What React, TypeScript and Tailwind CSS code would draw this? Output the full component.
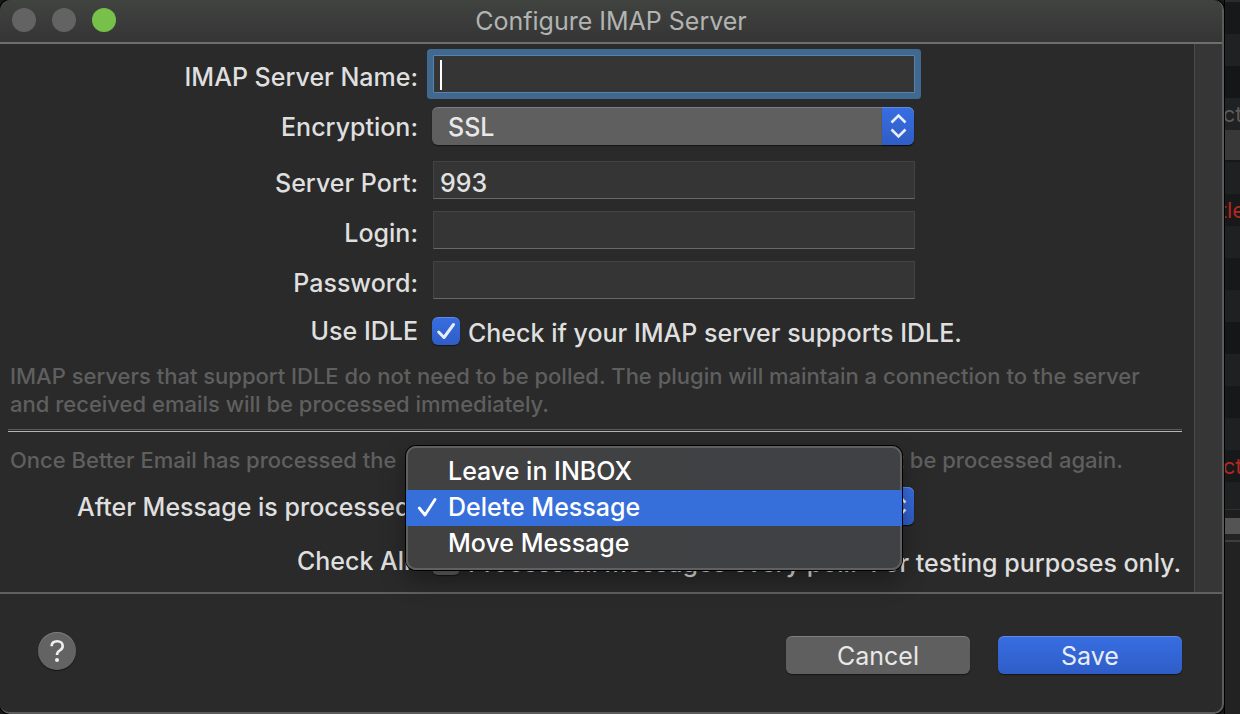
import React, { useState } from 'react';
import { clsx } from 'clsx';

const AFTER_OPTIONS = ['Leave in INBOX', 'Delete Message', 'Move Message'];

// Rows of the list window that peeks out behind the dialog
const BACKDROP_ROWS = [
  { className: 'h-0.5 bg-[#2a2b2c]' },
  { className: 'h-8 bg-[#17181a]' },
  { className: 'h-8 bg-[#202123]' },
  { className: 'h-8 bg-[#151617]' },
  { className: 'h-8 bg-[#202123] text-[#5a5b5c]', text: 'ct' },
  { className: 'h-[30px] bg-[#383838]' },
  { className: 'h-0.5 bg-[#17181a]' },
  { className: 'h-8 bg-[#1f2022]' },
  { className: 'h-8 bg-[#17181a] text-[#b3271e]', text: 'tle' },
  { className: 'h-8 bg-[#1f2022]' },
  { className: 'h-8 bg-[#17181a]' },
  { className: 'h-8 bg-[#1f2022]' },
  { className: 'h-8 bg-[#151617]' },
  { className: 'h-8 bg-[#1f2022]' },
  { className: 'h-8 bg-[#17181a]' },
  { className: 'h-8 bg-[#1f2022]' },
  { className: 'h-8 bg-[#17181a] text-[#b3271e]', text: 'ct' },
  { className: 'h-7 bg-[#1f2022] border-b border-[#303132]' },
  { className: 'h-2 bg-[#1e1e1e]' },
  { className: 'h-4 bg-[#545454]' },
  { className: 'h-2 bg-[#242424] border-b-2 border-[#3e3e3e]' },
];

const SHADE = 'shadow-[inset_0_1px_0_rgba(255,255,255,0.2),0_1px_1px_rgba(0,0,0,0.5)]';

function Row({ label, htmlFor, className, labelClass, children }: {
  label: string;
  htmlFor: string;
  className?: string;
  labelClass?: string;
  children: React.ReactNode;
}) {
  return (
    <div className={clsx('grid grid-cols-[418px_1fr] gap-x-3.5', className)}>
      <label htmlFor={htmlFor} className={clsx('flex items-center justify-end whitespace-nowrap', labelClass)}>
        {label}
      </label>
      {children}
    </div>
  );
}

function TextField({ id, type = 'text', value, focused }: { id: string; type?: string; value?: string; focused?: boolean }) {
  return (
    <div className="relative ml-px w-[482px]">
      <input
        id={id}
        type={type}
        defaultValue={value}
        className={clsx(
          'block h-[38px] w-full border bg-[#353535] px-1.5 pt-1.5 text-[#e2e2e2] caret-white outline-none',
          focused
            ? 'border-[#5583ae] shadow-[0_0_0_6px_#41698f] rounded-[1px] caret-transparent'
            : 'border-[#434343] border-b-[#686868]'
        )}
      />
      {focused && <span className="absolute left-[7px] top-[5px] h-[30px] w-0.5 bg-white" />}
    </div>
  );
}

function Popup({ id, options, value, children }: { id: string; options: string[]; value: string; children?: React.ReactNode }) {
  return (
    <div className="relative w-[482px]">
      <select
        id={id}
        defaultValue={value}
        className={clsx('block h-[38px] w-full appearance-none rounded-md bg-[#5f5f5f] px-4 pt-0.5 text-[#e8e8e8] outline-none', SHADE)}
      >
        {options.map(option => <option key={option}>{option}</option>)}
      </select>
      <span
        className={clsx(
          'pointer-events-none absolute inset-y-0 right-0 flex w-8 items-center justify-center rounded-r-md bg-linear-to-b from-[#386ee2] to-[#2f5dc6]',
          SHADE
        )}
      >
        <svg width="32" height="38" viewBox="0 0 32 38" fill="none" stroke="#e8edf9" strokeWidth="2.6">
          <path d="M9.5 15.5 16.5 8.5 23.5 15.5" />
          <path d="M9.5 22.5 16.5 29.5 23.5 22.5" />
        </svg>
      </span>
      {children}
    </div>
  );
}

function Checkbox({ id, checked }: { id: string; checked?: boolean }) {
  return (
    <span className="relative block size-7 shrink-0">
      <input
        id={id}
        type="checkbox"
        defaultChecked={checked}
        className={clsx(
          'peer block size-7 appearance-none rounded-md bg-[#5f5f5f] checked:bg-linear-to-b checked:from-[#386ee2] checked:to-[#2f5dc6]',
          SHADE
        )}
      />
      <svg
        className="pointer-events-none absolute inset-0 hidden peer-checked:block"
        width="28" height="28" viewBox="0 0 28 28"
        fill="none" stroke="#e8edf9" strokeWidth="3" strokeLinecap="round" strokeLinejoin="round"
      >
        <path d="M6.7 15 12 20.5 21.5 7.5" />
      </svg>
    </span>
  );
}

export default function App() {
  const [after, setAfter] = useState('Delete Message');

  return (
    <div className="flex min-h-screen bg-[#191a1b] font-['Inter',sans-serif] text-[25px] leading-8 text-[#dfdfdf]">
      <main className="flex min-w-0 flex-1 flex-col rounded-[10px] border-r-2 border-b-2 border-[#5b5b5b] bg-[#2a2a2a] shadow-[0_0_0_1px_#000]">

        {/* Title bar */}
        <header className="grid h-11 grid-cols-[1fr_auto_1fr] items-center rounded-t-[10px] border-b-2 border-[#6d6e6d] bg-linear-to-b from-[#414341] to-[#343534]">
          <div className="flex gap-4 pb-0.5 pl-3">
            <button type="button" aria-label="Close" className="size-6 rounded-full bg-[#636363]" />
            <button type="button" aria-label="Minimize" className="size-6 rounded-full bg-[#636363]" />
            <button type="button" aria-label="Zoom" className="size-6 rounded-full bg-[#77c14a]" />
          </div>
          <h1 className="text-[#b2b4b2]">Configure IMAP Server</h1>
        </header>

        <div className="flex flex-1">
          <form className="min-w-0 flex-1 pt-[11px] pb-[17px] font-medium">
            <Row label="IMAP Server Name:" htmlFor="server" labelClass="pt-1.5">
              <TextField id="server" focused />
            </Row>
            <Row label="Encryption:" htmlFor="encryption" className="mt-3.5" labelClass="pt-0.5">
              <Popup id="encryption" options={['SSL']} value="SSL" />
            </Row>
            <Row label="Server Port:" htmlFor="port" className="mt-4" labelClass="pt-1.5">
              <TextField id="port" value="993" />
            </Row>
            <Row label="Login:" htmlFor="login" className="mt-3" labelClass="pt-1.5">
              <TextField id="login" />
            </Row>
            <Row label="Password:" htmlFor="password" className="mt-3" labelClass="pt-1.5">
              <TextField id="password" type="password" />
            </Row>
            <Row label="Use IDLE" htmlFor="idle" className="mt-[18px] grid-rows-[28px]">
              <div className="flex items-center gap-2">
                <Checkbox id="idle" checked />
                <label htmlFor="idle" className="pt-1 whitespace-nowrap">Check if your IMAP server supports IDLE.</label>
              </div>
            </Row>

            <p className="mt-[17px] pr-10 pl-2.5 text-[22px] leading-7 text-[#5f5f5f]">
              IMAP servers that support IDLE do not need to be polled. The plugin will maintain a connection to the server and received emails will be processed immediately.
            </p>

            <hr className="mt-[11px] mr-3 ml-2 h-[3px] border-t border-b border-t-[#5a5a5a] border-b-[#b5b5b5]" />

            <p className="mt-3.5 flex justify-between pr-[71px] pl-2.5 text-[22px] leading-7 text-[#5f5f5f]">
              <span>Once Better Email has processed the</span>
              <span>not be processed again.</span>
            </p>

            <Row label="After Message is processed:" htmlFor="after" className="mt-[13px]" labelClass="pt-0.5">
              <Popup id="after" options={AFTER_OPTIONS} value={after}>
                <ul
                  role="listbox"
                  aria-label="After Message is processed"
                  className="absolute -top-[41px] -left-[26px] z-10 w-[496px] rounded-[10px] bg-linear-to-r from-[#414141] to-[#3f4145] py-2 text-white shadow-[inset_0_0_0_2px_#606060,0_0_0_1px_#000,0_10px_24px_rgba(0,0,0,0.35)]"
                >
                  {AFTER_OPTIONS.map(option => (
                    <li
                      key={option}
                      role="option"
                      aria-selected={option === after}
                      onClick={() => setAfter(option)}
                      className={clsx('flex h-9 items-center pb-0.5', option === after && 'bg-[#376fda]')}
                    >
                      <span className="w-[42px]">
                        {option === after && (
                          <svg width="42" height="36" viewBox="0 0 42 36" fill="none" stroke="#fff" strokeWidth="2.8" strokeLinecap="round" strokeLinejoin="round">
                            <path d="M13.3 19 19 26 29 10.5" />
                          </svg>
                        )}
                      </span>
                      {option}
                    </li>
                  ))}
                </ul>
              </Popup>
            </Row>

            <Row label="Check All:" htmlFor="all" className="mt-[22px] grid-rows-[28px]">
              <div className="flex items-center gap-2">
                <Checkbox id="all" />
                <label htmlFor="all" className="pt-1 whitespace-pre">Process all messages every poll.  For testing purposes only.</label>
              </div>
            </Row>
          </form>

          {/* Scroll track */}
          <div className="w-7 border-l border-[#4b4b4b] bg-[#363636]" />
        </div>

        <footer className="flex items-start justify-between border-t-2 border-[#606060] py-[38px] pr-10 pl-[38px]">
          <button type="button" aria-label="Help" className={clsx('flex size-[38px] items-center justify-center rounded-full bg-[#636363]', SHADE)}>
            <svg width="38" height="38" viewBox="0 0 38 38" fill="none" stroke="#efefef" strokeWidth="2.6">
              <path d="M13.6 14.2C13.7 11 16 9.2 19.2 9.2C22.5 9.2 24.7 11.1 24.7 13.9C24.7 16 23.6 17.3 21.7 18.5C19.7 19.7 19 20.7 19 23" />
              <circle cx="19" cy="28" r="2" fill="#efefef" stroke="none" />
            </svg>
          </button>
          <div className="flex gap-7 pt-1">
            <button type="button" className={clsx('h-[38px] w-[184px] rounded-md bg-[#5f5f5f] pt-0.5 text-[#e8e8e8]', SHADE)}>Cancel</button>
            <button type="button" className={clsx('h-[38px] w-[184px] rounded-md bg-linear-to-b from-[#386ee2] to-[#2f5dc6] pt-0.5 text-[#e8edf9]', SHADE)}>Save</button>
          </div>
        </footer>
      </main>

      {/* Window behind */}
      <aside aria-hidden="true" className="w-4 overflow-hidden border-l border-black bg-[#222222] text-[22px]">
        {BACKDROP_ROWS.map((row, i) => (
          <div key={i} className={clsx('flex items-center justify-center overflow-hidden', row.className)}>
            {row.text}
          </div>
        ))}
      </aside>
    </div>
  );
}
